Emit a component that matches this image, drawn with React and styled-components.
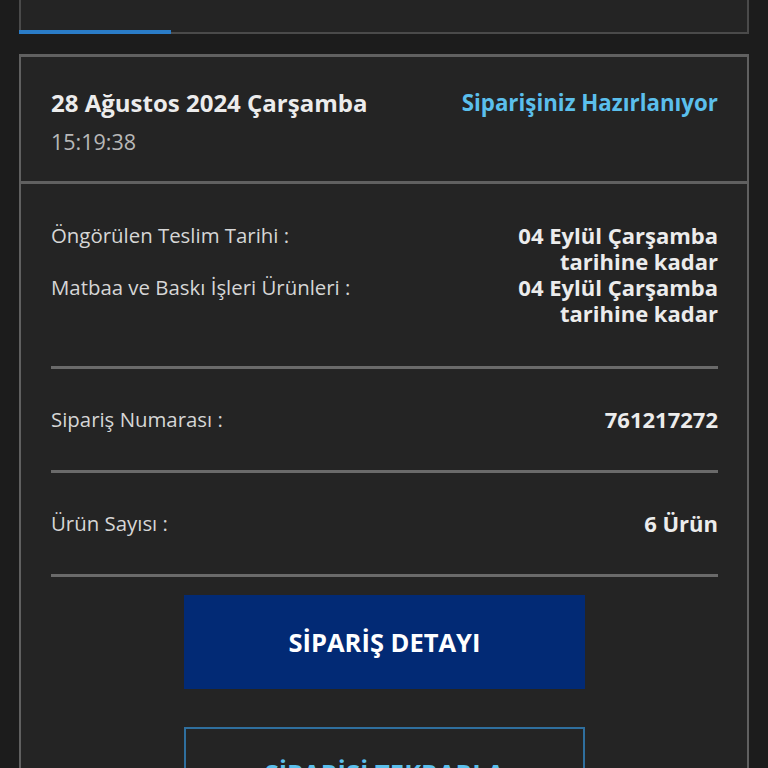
import React from 'react';
import styled, { createGlobalStyle } from 'styled-components';

const GlobalStyle = createGlobalStyle`
  html, body {
    margin: 0;
    padding: 0;
    background: #1c1c1c;
    font-family: "Open Sans", "Noto Sans", sans-serif;
    color: #e6e6e6;
    overflow: hidden;
  }
`;

const Page = styled.div`
  padding: 0 19px;
  height: 768px;
  overflow: hidden;
`;

const TabCard = styled.div`
  margin-top: -44px;
  height: 76px;
  border: 2px solid #4a4a4a;
  border-top: none;
  background: #242424;
  position: relative;
  display: flex;
  align-items: flex-start;
  padding: 0 30px;
  gap: 180px;
  font-size: 20px;
  color: #ddd;
`;

const TabLabel = styled.span`
  line-height: 42px;
`;

const TabIndicator = styled.div`
  position: absolute;
  left: -2px;
  bottom: -2px;
  width: 152px;
  height: 4px;
  background: #2a7cc7;
`;

const Card = styled.div`
  margin-top: 20px;
  border: 2px solid #606060;
  border-top-width: 3px;
  background: #242424;
`;

const Header = styled.div`
  display: flex;
  justify-content: space-between;
  align-items: flex-start;
  padding: 30px 29px 20px 30px;
  height: 74px;
  border-bottom: 3px solid #606060;
`;

const DateBlock = styled.div`
  display: flex;
  flex-direction: column;
  gap: 8px;
`;

const DateText = styled.div`
  font-size: 24px;
  font-weight: 700;
  color: #ececec;
  line-height: 32px;
`;

const TimeText = styled.div`
  font-size: 21.5px;
  color: #b8b8b8;
  line-height: 30px;
`;

const Status = styled.div`
  font-size: 22.3px;
  font-weight: 700;
  color: #5bbfec;
  line-height: 32px;
`;

const Body = styled.div`
  padding: 0 29px 0 30px;
`;

const Section = styled.div`
  display: flex;
  flex-direction: column;
  padding: ${({ $pad }) => $pad};
  border-bottom: 3px solid #6a6a6a;
`;

const Row = styled.div`
  display: flex;
  justify-content: space-between;
  align-items: flex-start;
`;

const Label = styled.div`
  font-size: 20.4px;
  color: #d6d6d6;
  line-height: 26px;
`;

const Value = styled.div`
  font-size: 22px;
  font-weight: 700;
  color: #ececec;
  line-height: 26px;
  text-align: right;
`;

const Actions = styled.div`
  display: flex;
  flex-direction: column;
  align-items: center;
  gap: 38px;
  padding-top: 18px;
`;

const Button = styled.button`
  width: 401px;
  height: ${({ $outline }) => ($outline ? 92 : 94)}px;
  border: ${({ $outline }) => ($outline ? '2px solid #2f6f9e' : 'none')};
  background: ${({ $outline }) => ($outline ? 'transparent' : '#022a75')};
  color: ${({ $outline }) => ($outline ? '#5bbfec' : '#ffffff')};
  font-family: "Open Sans", "Noto Sans", sans-serif;
  font-size: 25.5px;
  font-weight: 700;
  cursor: pointer;
`;

const App = () => (
  <>
    <GlobalStyle />
    <Page>
      <TabCard>
        <TabLabel>Siparişlerim</TabLabel>
        <TabLabel>İade / İptal Siparişlerim</TabLabel>
        <TabIndicator />
      </TabCard>
      <Card>
        <Header>
          <DateBlock>
            <DateText>28 Ağustos 2024 Çarşamba</DateText>
            <TimeText>15:19:38</TimeText>
          </DateBlock>
          <Status>Siparişiniz Hazırlanıyor</Status>
        </Header>
        <Body>
          <Section $pad="38px 0 40px">
            <Row>
              <Label>Öngörülen Teslim Tarihi :</Label>
              <Value>
                04 Eylül Çarşamba
                <br />
                tarihine kadar
              </Value>
            </Row>
            <Row>
              <Label>Matbaa ve Baskı İşleri Ürünleri :</Label>
              <Value>
                04 Eylül Çarşamba
                <br />
                tarihine kadar
              </Value>
            </Row>
          </Section>
          <Section $pad="37px 0 38px">
            <Row>
              <Label>Sipariş Numarası :</Label>
              <Value>761217272</Value>
            </Row>
          </Section>
          <Section $pad="37px 0 38px">
            <Row>
              <Label>Ürün Sayısı :</Label>
              <Value>6 Ürün</Value>
            </Row>
          </Section>
          <Actions>
            <Button>SİPARİŞ DETAYI</Button>
            <Button $outline>SİPARİŞİ TEKRARLA</Button>
          </Actions>
        </Body>
      </Card>
    </Page>
  </>
);

export default App;
